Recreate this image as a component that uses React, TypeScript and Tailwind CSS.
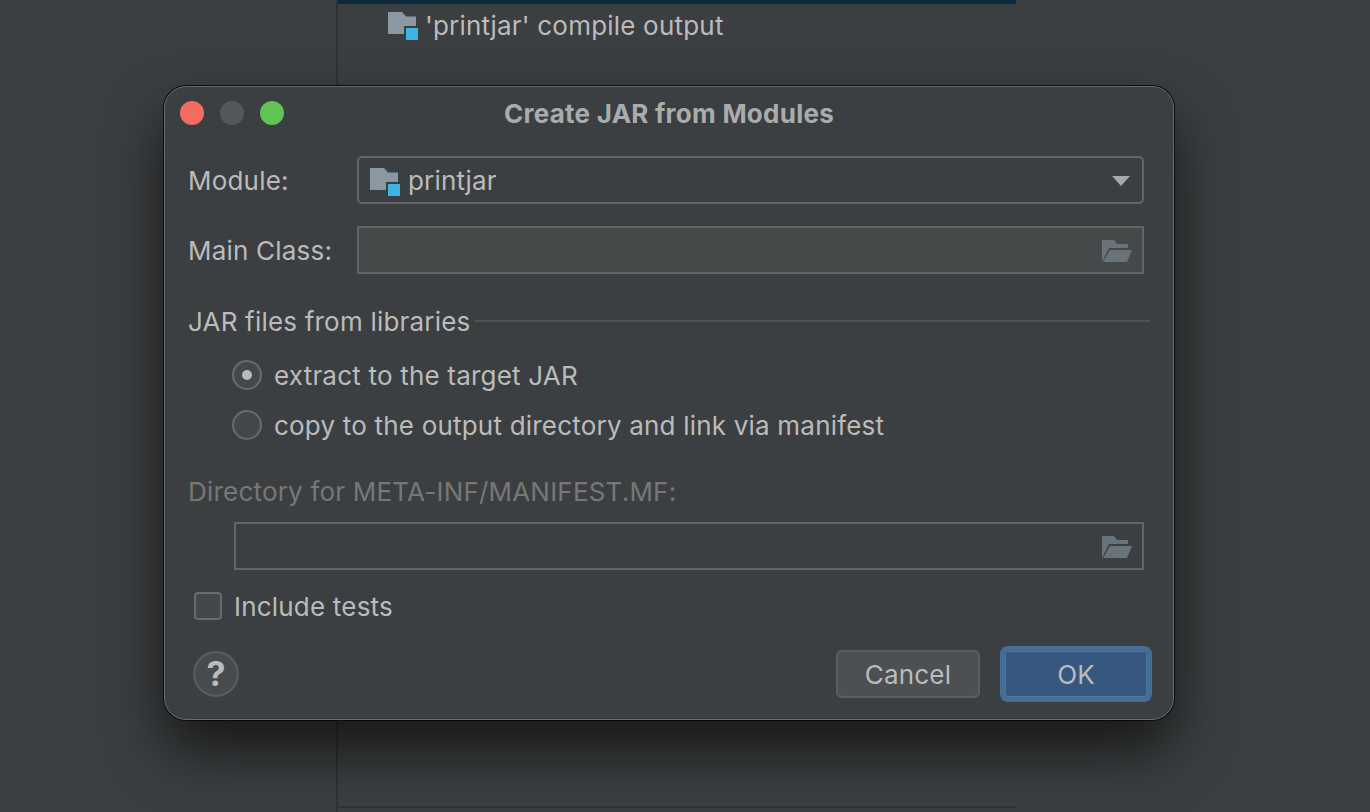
import React from "react";

function ModuleIcon() {
  return (
    <svg width="30" height="28" viewBox="0 0 30 28" className="shrink-0">
      <path d="M0 0H14L18 4.500H28V22H0Z" fill="#8a98a3" />
      <rect x="16" y="14" width="14" height="14" fill="#3c3f41" />
      <rect x="18" y="16" width="12" height="12" fill="#3eb3e4" />
    </svg>
  );
}

function OpenFolder() {
  return (
    <svg width="30" height="22" viewBox="0 0 30 22" className="mt-[2px] shrink-0">
      <path d="M0 0H12L15 4H26V8H7L1.500 19L0 22Z" fill="#69747a" />
      <path d="M8 10H30L25 22H1Z" fill="#69747a" />
    </svg>
  );
}

export default function App() {
  return (
    <div className="relative flex h-[812px] w-[1370px] overflow-hidden bg-[#3c3f41] font-['Inter','Liberation_Sans',sans-serif] text-[26px] tracking-[0.2px] text-[#bbbbbb]">
      <div className="w-[338px] shrink-0 border-r-2 border-[#323232]" />
      <div className="flex w-[678px] shrink-0 flex-col">
        <div className="h-[4px] bg-[#0d293e]" />
        <div className="flex h-[43px] items-center gap-[7px] pl-[50px]">
          <div className="mt-[1px] h-[28px]"><ModuleIcon /></div>
          <span className="leading-none">'printjar' compile output</span>
        </div>
        <div className="mt-auto mb-[4px] h-[2px] bg-[#323232]" />
      </div>

      <div className="absolute left-[164px] top-[86px] flex h-[634px] w-[1010px] flex-col rounded-[22px] border border-[#6b6e70] bg-[#3c3f41] pl-[23px] pr-[23px] shadow-[0_0_0_1px_#0b0b0c,0_30px_60px_rgba(0,0,0,0.65)]">
        <div className="relative flex h-[52px] shrink-0 items-center justify-center pt-[1px]">
          <div className="absolute left-[-8px] top-[14px] flex gap-[16px]">
            <div className="h-[24px] w-[24px] rounded-full bg-[#f26d60]" />
            <div className="h-[24px] w-[24px] rounded-full bg-[#54585a]" />
            <div className="h-[24px] w-[24px] rounded-full bg-[#61c555]" />
          </div>
          <span className="font-bold tracking-[0.25px] text-[#a9abac]">Create JAR from Modules</span>
        </div>

        <div className="mt-[17px] flex h-[48px] items-center">
          <span className="w-[169px] shrink-0">Module:</span>
          <div className="flex h-[48px] w-[787px] items-center rounded-[5px] border-2 border-[#646464] pl-[11px] pr-[12px]">
            <div className="mt-[4px] h-[28px]"><ModuleIcon /></div>
            <span className="ml-[8px] flex-1">printjar</span>
            <svg width="18" height="10" viewBox="0 0 18 10" className="mt-[2px]"><path d="M0 0H18L9 10Z" fill="#a5a7a8" /></svg>
          </div>
        </div>

        <div className="mt-[22px] flex h-[48px] items-center">
          <span className="w-[169px] shrink-0">Main Class:</span>
          <div className="flex h-[48px] w-[787px] items-center justify-end border-2 border-[#646464] bg-[#45494a] pr-[10px]">
            <OpenFolder />
          </div>
        </div>

        <div className="mt-[28px] flex h-[38px] items-center">
          <span className="shrink-0">JAR files from libraries</span>
          <div className="ml-[5px] h-[2px] flex-1 bg-[#4f5254]" />
        </div>

        <div className="mt-[19px] flex h-[32px] items-center pl-[44px]">
          <div className="flex h-[30px] w-[30px] items-center justify-center rounded-full border-2 border-[#6b6b6b] bg-[#43494a]">
            <div className="h-[10px] w-[10px] rounded-full bg-[#bbbbbb]" />
          </div>
          <span className="ml-[12px]">extract to the target JAR</span>
        </div>
        <div className="mt-[18px] flex h-[32px] items-center pl-[44px]">
          <div className="h-[30px] w-[30px] rounded-full border-2 border-[#6b6b6b] bg-[#43494a]" />
          <span className="ml-[12px]">copy to the output directory and link via manifest</span>
        </div>

        <div className="mt-[32px] flex h-[36px] items-center text-[#777777]">Directory for META-INF/MANIFEST.MF:</div>

        <div className="ml-[46px] mt-[13px] flex h-[48px] w-[910px] items-center justify-end border-2 border-[#646464] pr-[10px]">
          <OpenFolder />
        </div>

        <div className="mt-[22px] flex h-[28px] items-center pl-[6px]">
          <div className="h-[28px] w-[28px] rounded-[4px] border-2 border-[#6b6b6b] bg-[#43494a]" />
          <span className="ml-[12px]">Include tests</span>
        </div>

        <div className="mt-[26px] flex h-[56px] items-center justify-between pl-[5px]">
          <div className="flex h-[46px] w-[46px] items-center justify-center rounded-full border-2 border-[#5a5d5f] bg-[#484b4d] text-[34px] font-bold leading-none text-[#bbbbbb]">?</div>
          <div className="mr-[-2px] flex items-center gap-[20px]">
            <div className="flex h-[48px] w-[144px] items-center justify-center rounded-[6px] border-2 border-[#5c5f61] bg-[#4c5052]">Cancel</div>
            <div className="flex h-[56px] w-[152px] items-center justify-center rounded-[8px] border-[5px] border-[#466d94] bg-[#365880] shadow-[inset_0_0_0_1px_#4e769e]">OK</div>
          </div>
        </div>
      </div>
    </div>
  );
}
